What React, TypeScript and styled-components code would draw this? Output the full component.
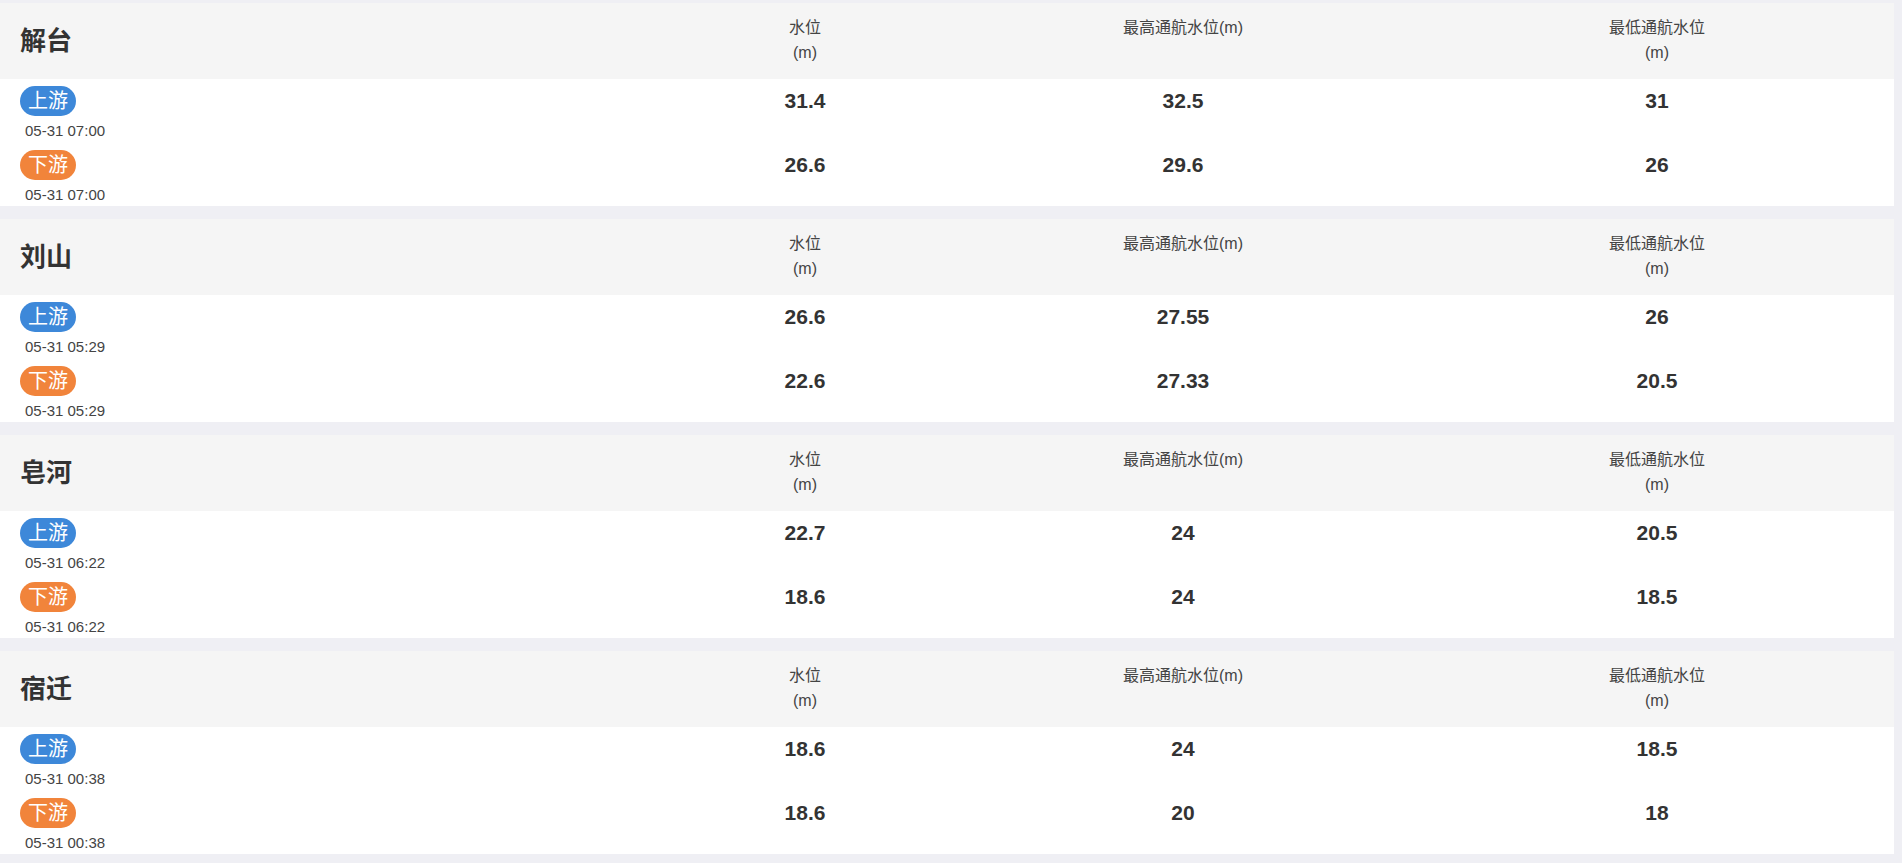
import styled, { createGlobalStyle } from "styled-components";

type Gauge = {
  time: string;
  level: string;
  high: string;
  low: string;
};

type Station = {
  name: string;
  up: Gauge;
  down: Gauge;
};

const stations: Station[] = [
  {
    name: "解台",
    up: { time: "05-31 07:00", level: "31.4", high: "32.5", low: "31" },
    down: { time: "05-31 07:00", level: "26.6", high: "29.6", low: "26" },
  },
  {
    name: "刘山",
    up: { time: "05-31 05:29", level: "26.6", high: "27.55", low: "26" },
    down: { time: "05-31 05:29", level: "22.6", high: "27.33", low: "20.5" },
  },
  {
    name: "皂河",
    up: { time: "05-31 06:22", level: "22.7", high: "24", low: "20.5" },
    down: { time: "05-31 06:22", level: "18.6", high: "24", low: "18.5" },
  },
  {
    name: "宿迁",
    up: { time: "05-31 00:38", level: "18.6", high: "24", low: "18.5" },
    down: { time: "05-31 00:38", level: "18.6", high: "20", low: "18" },
  },
];

const GlobalStyle = createGlobalStyle`
  html, body {
    margin: 0;
    padding: 0;
    background: #efeff4;
    font-family: "Liberation Sans", "Noto Sans CJK SC", sans-serif;
    color: #333;
  }
`;

// columns: name | 水位 | 最高 | 最低
const COLS = "664fr 282fr 474fr 474fr";

const Page = styled.div`
  display: flex;
  flex-direction: column;
  gap: 13px;
  padding: 3px 8px 9px 0;
`;

const Card = styled.section`
  background: #fff;
`;

const HeadRow = styled.div`
  display: grid;
  grid-template-columns: ${COLS};
  height: 76px;
  background: #f5f5f5;
`;

const Title = styled.h2`
  margin: 0;
  padding-left: 20px;
  align-self: center;
  font-size: 26px;
  line-height: 30px;
  font-weight: bold;
  color: #333;
  margin-top: -1px;
`;

const ColHead = styled.div`
  padding-top: 12px;
  text-align: center;
  font-size: 16px;
  line-height: 25px;
  color: #444;
`;

const Row = styled.div`
  display: grid;
  grid-template-columns: ${COLS};
  height: 63.5px;
`;

const Side = styled.div`
  padding: 7px 0 0 20px;
  display: flex;
  flex-direction: column;
  align-items: flex-start;
`;

const Badge = styled.span<{ $down?: boolean }>`
  display: inline-block;
  height: 30px;
  line-height: 30px;
  padding: 0 8px;
  border-radius: 15px;
  font-size: 20px;
  color: #fff;
  background: ${(p) => (p.$down ? "#f1843b" : "#3d88d9")};
`;

const Time = styled.div`
  margin-top: 5px;
  padding-left: 5px;
  font-size: 15px;
  line-height: 20px;
  color: #444;
`;

const Value = styled.div`
  padding-top: 7px;
  text-align: center;
  font-size: 21px;
  line-height: 30px;
  font-weight: bold;
  color: #333;
`;

function GaugeRow({ label, data, down }: { label: string; data: Gauge; down?: boolean }) {
  return (
    <Row>
      <Side>
        <Badge $down={down}>{label}</Badge>
        <Time>{data.time}</Time>
      </Side>
      <Value>{data.level}</Value>
      <Value>{data.high}</Value>
      <Value>{data.low}</Value>
    </Row>
  );
}

export default function App() {
  return (
    <>
      <GlobalStyle />
      <Page>
        {stations.map((s) => (
          <Card key={s.name}>
            <HeadRow>
              <Title>{s.name}</Title>
              <ColHead>
                水位
                <br />
                (m)
              </ColHead>
              <ColHead>最高通航水位(m)</ColHead>
              <ColHead>
                最低通航水位
                <br />
                (m)
              </ColHead>
            </HeadRow>
            <GaugeRow label="上游" data={s.up} />
            <GaugeRow label="下游" data={s.down} down />
          </Card>
        ))}
      </Page>
    </>
  );
}
